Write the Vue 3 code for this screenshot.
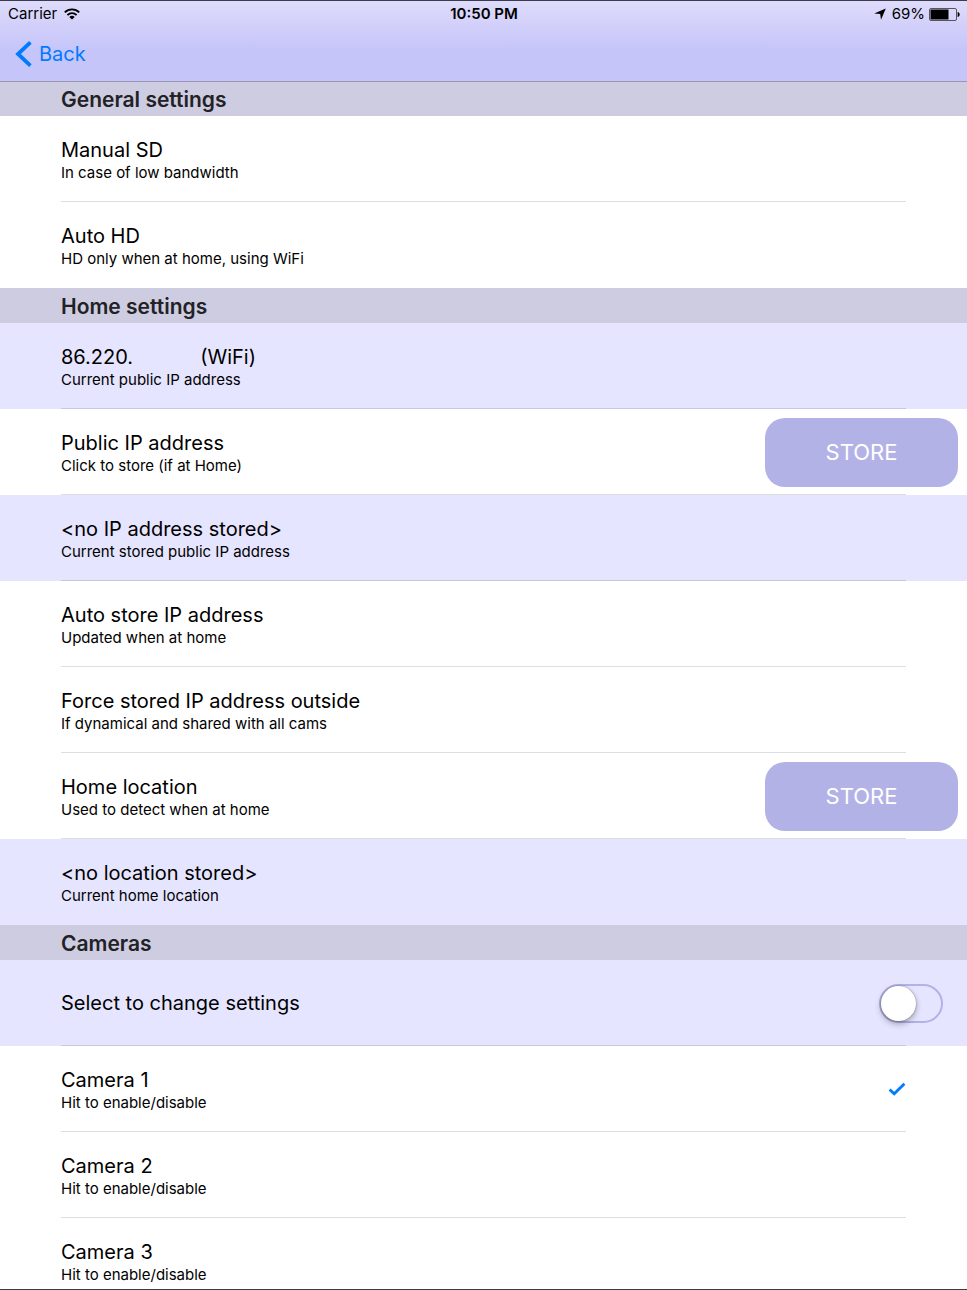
<script setup>
import { ref } from 'vue'

const editMode = ref(false)

// One entry per group in the settings list
const sections = ref([
  {
    title: 'General settings',
    rows: [
      { id: 'manual-sd', title: 'Manual SD', detail: 'In case of low bandwidth' },
      { id: 'auto-hd', title: 'Auto HD', detail: 'HD only when at home, using WiFi' },
    ],
  },
  {
    title: 'Home settings',
    rows: [
      { id: 'ip', title: '86.220.', network: '(WiFi)', detail: 'Current public IP address', info: true },
      { id: 'store-ip', title: 'Public IP address', detail: 'Click to store (if at Home)', store: true },
      { id: 'stored-ip', title: '<no IP address stored>', detail: 'Current stored public IP address', info: true },
      { id: 'auto-ip', title: 'Auto store IP address', detail: 'Updated when at home' },
      { id: 'force-ip', title: 'Force stored IP address outside', detail: 'If dynamical and shared with all cams' },
      { id: 'store-location', title: 'Home location', detail: 'Used to detect when at home', store: true },
      { id: 'location', title: '<no location stored>', detail: 'Current home location', info: true },
    ],
  },
  {
    title: 'Cameras',
    rows: [
      { id: 'edit-mode', title: 'Select to change settings', info: true, toggle: true },
      { id: 'camera-1', title: 'Camera 1', detail: 'Hit to enable/disable', camera: true, enabled: true },
      { id: 'camera-2', title: 'Camera 2', detail: 'Hit to enable/disable', camera: true, enabled: false },
      { id: 'camera-3', title: 'Camera 3', detail: 'Hit to enable/disable', camera: true, enabled: false },
    ],
  },
])

// Tapping a camera row turns that camera on or off
function selectRow(row) {
  if (row.camera) {
    row.enabled = !row.enabled
  }
}
</script>

<template>
  <div class="screen">
    <header class="top">
      <div class="status">
        <div class="status-left">
          <span>Carrier</span>
          <svg class="wifi" viewBox="0 0 16 12" width="16" height="12">
            <g fill="none" stroke="#000" stroke-width="1.9">
              <path d="M0.8 4.4C4.8 0.4 11.2 0.4 15.2 4.4" />
              <path d="M3.4 7.1C6 4.5 10 4.5 12.6 7.1" />
            </g>
            <path d="M8 11.6L5.3 8.9C6.8 7.4 9.2 7.4 10.7 8.9Z" />
          </svg>
        </div>
        <span class="clock">10:50 PM</span>
        <div class="status-right">
          <svg class="arrow" viewBox="0 0 12 12" width="12" height="12">
            <path d="M11.8 0.4L7 11.8L6.2 6L0.2 5.6Z" />
          </svg>
          <span>69%</span>
          <svg viewBox="0 0 31 13" width="31" height="13">
            <rect x="0.5" y="0.5" width="27" height="12" rx="1.5" fill="none" stroke="#55555f" />
            <rect x="1.5" y="1.5" width="18" height="10" />
            <path d="M28.6 4C31.4 4.6 31.4 8.4 28.6 9Z" />
          </svg>
        </div>
      </div>
      <nav class="nav">
        <a class="back" href="#">
          <svg viewBox="0 0 17 26" width="17" height="26">
            <path d="M15.4 1.4L3 13L15.4 24.6" fill="none" stroke="#007aff" stroke-width="3.8" />
          </svg>
          <span>Back</span>
        </a>
      </nav>
    </header>

    <main class="list">
      <section v-for="section in sections" :key="section.title">
        <h2>{{ section.title }}</h2>
        <div
          v-for="row in section.rows"
          :key="row.id"
          class="row"
          :class="{ info: row.info }"
          @click="selectRow(row)"
        >
          <div class="text">
            <label v-if="row.toggle" class="title" for="edit-switch">{{ row.title }}</label>
            <p v-else class="title">
              {{ row.title }}<span v-if="row.network" class="network">{{ row.network }}</span>
            </p>
            <p v-if="row.detail" class="detail">{{ row.detail }}</p>
          </div>
          <button v-if="row.store" type="button" class="store">STORE</button>
          <input v-if="row.toggle" id="edit-switch" v-model="editMode" class="switch" type="checkbox" />
          <svg v-if="row.enabled" class="check" viewBox="0 0 18 14" width="18" height="14">
            <path d="M1.6 7.4L6.2 11.8L16.4 1.8" fill="none" stroke="#007aff" stroke-width="2.8" />
          </svg>
        </div>
      </section>
    </main>
  </div>
</template>

<style>
body {
  margin: 0;
}
</style>

<style scoped>
.screen {
  display: flex;
  flex-direction: column;
  height: 100vh;
  box-sizing: border-box;
  border-top: 1px solid #3c3a4c;
  border-bottom: 1px solid #3c3c3e;
  background: #fff;
  color: #000;
  font-family: Inter, 'Liberation Sans', sans-serif;
}

/* the hairline is a shadow so that it lies over the list */
.top {
  position: relative;
  z-index: 1;
  flex: none;
  background: linear-gradient(#dedcfb, #c6c5fa 60%, #c6c5fa);
  box-shadow: 0 1px 0 #9997b4;
}

.status {
  display: grid;
  grid-template-columns: 1fr auto 1fr;
  align-items: center;
  height: 26px;
  padding: 0 7px 0 8px;
  font-size: 15px;
  line-height: 18px;
}

.status-left,
.status-right {
  display: flex;
  align-items: center;
}

.status-left {
  gap: 7px;
}

.status-right {
  justify-content: flex-end;
  gap: 4px;
}

.arrow {
  margin-right: 2px;
}

.clock {
  font-weight: 600;
}

.nav {
  display: flex;
  align-items: center;
  height: 54px;
  padding: 0 15px;
}

.back {
  display: flex;
  align-items: center;
  gap: 7px;
  color: #007aff;
  font-size: 20px;
  line-height: 24px;
  text-decoration: none;
}

.list {
  flex: 1;
  min-height: 0;
  overflow-y: auto;
  scrollbar-width: none;
}

h2 {
  margin: 0;
  padding: 2px 61px 0;
  background: #cecce0;
  color: #222226;
  font-size: 21px;
  font-weight: 600;
  line-height: 33px;
}

.row {
  position: relative;
  display: flex;
  align-items: center;
  height: 86px;
  padding-left: 61px;
}

.row.info {
  background: #e6e5ff;
}

/* separator under every row but the last of a section */
.row:not(:last-child)::after {
  content: '';
  position: absolute;
  right: 61px;
  bottom: 0;
  left: 61px;
  height: 1px;
  background: rgba(0, 0, 30, 0.13);
}

.text {
  flex: 1;
  padding-top: 2px;
}

.title,
.detail {
  display: block;
  margin: 0;
}

.title {
  margin-bottom: 2px;
  font-size: 20px;
  line-height: 24px;
}

.network {
  margin-left: 67px;
}

.detail {
  font-size: 15px;
  line-height: 18px;
}

.store {
  width: 193px;
  height: 69px;
  margin-right: 9px;
  border: none;
  border-radius: 20px;
  background: #b3b2e6;
  color: #fff;
  font-family: inherit;
  font-size: 22px;
  cursor: pointer;
}

.switch {
  appearance: none;
  width: 64px;
  height: 39px;
  margin: 0 24px 0 0;
  border: 2px solid #b3b2e6;
  border-radius: 20px;
  cursor: pointer;
}

.switch::before {
  content: '';
  display: block;
  width: 35px;
  height: 35px;
  border-radius: 50%;
  background: #fff;
  box-shadow: 0 3px 6px rgba(0, 0, 0, 0.3), 0 0 2px rgba(0, 0, 0, 0.4);
}

.switch:checked {
  background: #b3b2e6;
}

.switch:checked::before {
  margin-left: 25px;
}

.check {
  margin-right: 61px;
}
</style>
